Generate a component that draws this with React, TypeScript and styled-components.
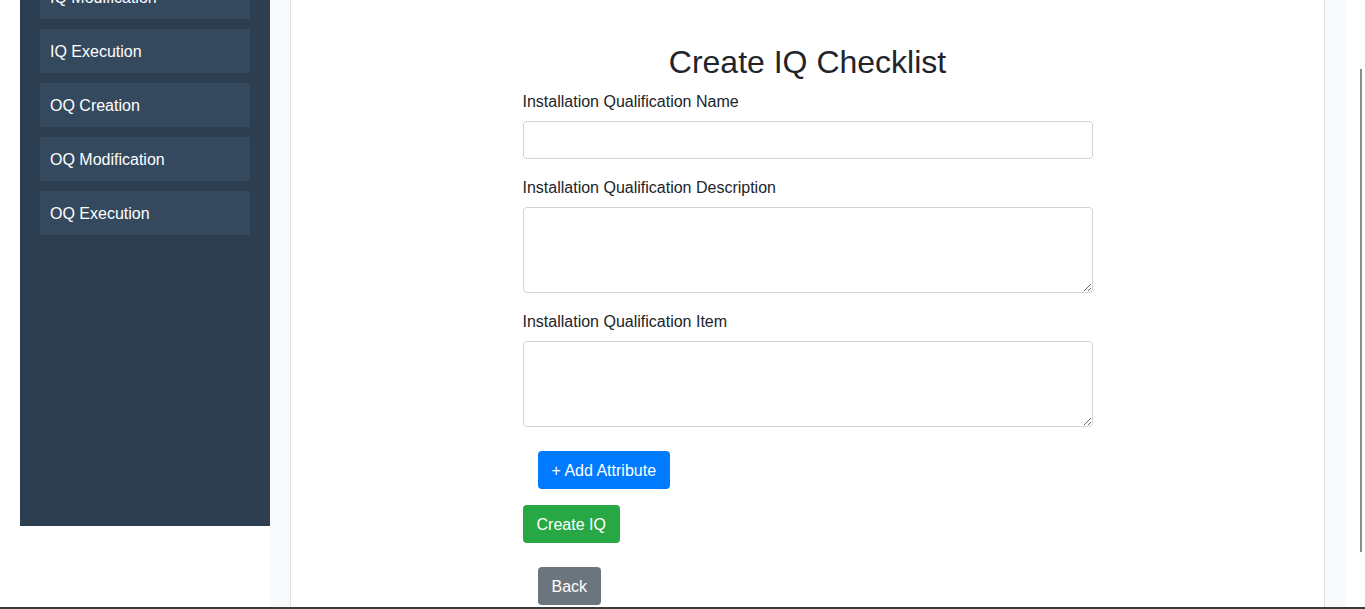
import React from "react";
import styled, { createGlobalStyle } from "styled-components";

const GlobalStyle = createGlobalStyle`
  html, body {
    margin: 0;
    padding: 0;
    height: 100%;
    overflow: hidden;
    background: #ffffff;
    font-family: "Liberation Sans", Arial, sans-serif;
    color: #212529;
  }
  * { box-sizing: border-box; }
`;

const SCROLL = 99;

const Page = styled.div`
  display: flex;
  align-items: flex-start;
  margin-top: -${SCROLL}px;
  padding-left: 20px;
  padding-right: 20px;
`;

const Sidebar = styled.nav`
  width: 250px;
  height: ${526 + SCROLL}px;
  flex-shrink: 0;
  background: #2c3e50;
  padding: 20px;
  display: flex;
  flex-direction: column;
  gap: 10px;
`;

const MenuItem = styled.a`
  display: block;
  background: #34495e;
  color: #ffffff;
  font-size: 16px;
  line-height: 20px;
  padding: 13px 10px 11px;
  text-decoration: none;
`;

const MainArea = styled.main`
  flex: 1;
  background: #f8f9fa;
  padding: 0 20px;
  height: calc(100vh + ${SCROLL}px);
`;

const Panel = styled.section`
  background: #ffffff;
  border-left: 1px solid #dee2e6;
  border-right: 1px solid #dee2e6;
  height: 100%;
  padding-top: ${SCROLL + 43}px;
  display: flex;
  flex-direction: column;
  align-items: center;
`;

const Title = styled.h2`
  margin: 0 0 8px;
  font-size: 32px;
  font-weight: 400;
  line-height: 1.2;
  color: #212529;
`;

const Form = styled.form`
  width: 570px;
  display: flex;
  flex-direction: column;
`;

const Group = styled.div`
  margin-bottom: 16px;
  display: flex;
  flex-direction: column;
`;

const Label = styled.label`
  font-size: 16px;
  line-height: 24px;
  padding-top: 1px;
  margin-bottom: 7px;
  color: #212529;
`;

const Input = styled.input`
  height: 38px;
  padding: 6px 12px;
  font-size: 16px;
  font-family: inherit;
  border: 1px solid #ced4da;
  border-radius: 4px;
  color: #495057;
  background: #fff;
`;

const TextArea = styled.textarea`
  height: 86px;
  padding: 6px 12px;
  font-size: 16px;
  line-height: 24px;
  font-family: inherit;
  border: 1px solid #ced4da;
  border-radius: 4px;
  color: #495057;
  background: #fff;
`;

const Button = styled.button<{ $variant: "primary" | "success" | "secondary"; $indent?: boolean; $top: number }>`
  align-self: flex-start;
  margin-top: ${(p) => p.$top}px;
  margin-left: ${(p) => (p.$indent ? 15 : 0)}px;
  height: 38px;
  padding: 7px 13px 5px;
  font-size: 16px;
  line-height: 24px;
  font-family: inherit;
  color: #ffffff;
  border: 1px solid transparent;
  border-radius: 4px;
  cursor: pointer;
  background: ${(p) =>
    p.$variant === "primary" ? "#007bff" : p.$variant === "success" ? "#28a745" : "#6c757d"};
`;

const ScrollThumb = styled.div`
  position: fixed;
  top: 69px;
  right: 3px;
  width: 2px;
  height: 483px;
  background: #8a8a8a;
`;

const BottomBar = styled.div`
  position: fixed;
  left: 0;
  right: 0;
  bottom: 0;
  height: 2px;
  background: #3a3a3a;
`;

const menu = ["IQ Creation", "IQ Modification", "IQ Execution", "OQ Creation", "OQ Modification", "OQ Execution"];

export default function App() {
  return (
    <>
      <GlobalStyle />
      <Page>
        <Sidebar>
          {menu.map((m) => (
            <MenuItem key={m} href="#">
              {m}
            </MenuItem>
          ))}
        </Sidebar>
        <MainArea>
          <Panel>
            <Title>Create IQ Checklist</Title>
            <Form onSubmit={(e) => e.preventDefault()}>
              <Group>
                <Label>Installation Qualification Name</Label>
                <Input type="text" />
              </Group>
              <Group>
                <Label>Installation Qualification Description</Label>
                <TextArea rows={3} />
              </Group>
              <Group>
                <Label>Installation Qualification Item</Label>
                <TextArea rows={3} />
              </Group>
              <Button type="button" $variant="primary" $indent $top={8}>
                + Add Attribute
              </Button>
              <Button type="submit" $variant="success" $top={16}>
                Create IQ
              </Button>
              <Button type="button" $variant="secondary" $indent $top={24}>
                Back
              </Button>
            </Form>
          </Panel>
        </MainArea>
      </Page>
      <ScrollThumb />
      <BottomBar />
    </>
  );
}
